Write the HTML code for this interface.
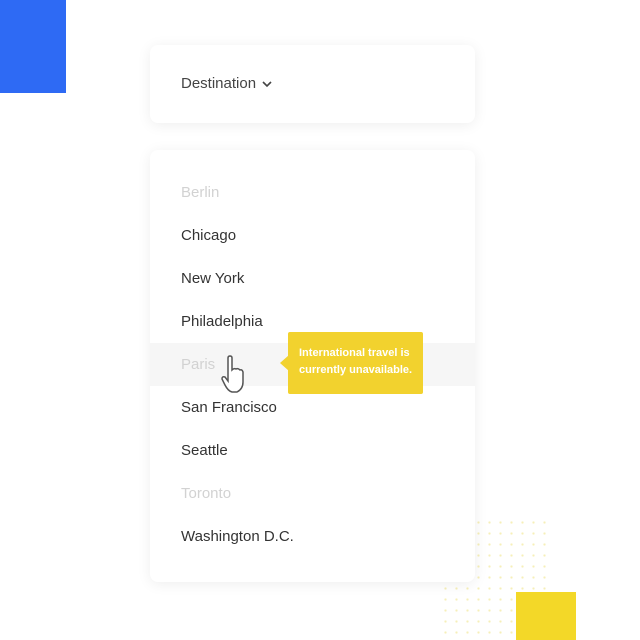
<!DOCTYPE html>
<html><head><style>
body{margin:0;width:640px;height:640px;background:#fff;position:relative;overflow:hidden;font-family:"Liberation Sans",sans-serif}
.a{position:absolute}
.card{background:#fff;border-radius:8px;box-shadow:0 2px 14px rgba(0,0,0,0.07)}
.it{position:absolute;left:31px;font-size:15px;color:#333;line-height:20px}
.dis{color:#d2d2d2}
</style></head><body>
<div class="a" style="left:0;top:0;width:66px;height:93px;background:#2e6af4"></div>
<div class="a" style="left:440px;top:517px;width:110px;height:123px;background-image:radial-gradient(#f6efb8 1px,transparent 1.3px);background-size:11px 11px"></div>
<div class="a" style="left:516px;top:592px;width:60px;height:48px;background:#f3d828"></div>
<div class="a card" style="left:150px;top:45px;width:325px;height:78px">
<div class="it" style="top:29px;color:#444">Destination <svg width="10" height="8" viewBox="0 0 10 8" style="margin-left:2px"><path d="M1 2 L5 6 L9 2" fill="none" stroke="#444" stroke-width="1.6"/></svg></div>
</div>
<div class="a card" style="left:150px;top:150px;width:325px;height:432px">
<div class="a" style="left:0;top:193px;width:325px;height:43px;background:#f6f6f6"></div>
<div class="it dis" style="top:33px">Berlin</div>
<div class="it" style="top:76px">Chicago</div>
<div class="it" style="top:119px">New York</div>
<div class="it" style="top:162px">Philadelphia</div>
<div class="it dis" style="top:205px">Paris</div>
<div class="it" style="top:248px">San Francisco</div>
<div class="it" style="top:291px">Seattle</div>
<div class="it dis" style="top:334px">Toronto</div>
<div class="it" style="top:377px">Washington D.C.</div>
</div>
<svg class="a" style="left:220px;top:355px" width="26" height="40" viewBox="0 0 26 40"><path d="M8 3 Q8 1 10 1 Q12 1 12 3 V15 Q14 13 16 14 Q18 13 20 15 Q22 14 23 17 V27 Q23 34 17 37 H12 Q8 36 5 30 L2 24 Q2 21 5 22 L8 26 Z" fill="#fff" stroke="#555" stroke-width="1.5"/></svg>
<div class="a" style="left:288px;top:332px;width:135px;height:62px;background:#f2d22e;border-radius:2px"></div>
<div class="a" style="left:280px;top:355px;width:0;height:0;border-top:8px solid transparent;border-bottom:8px solid transparent;border-right:9px solid #f2d22e"></div>
<div class="a" style="left:299px;top:345px;width:120px;font-size:11px;font-weight:bold;line-height:17px;color:#fff">International travel is currently unavailable.</div>
</body></html>
